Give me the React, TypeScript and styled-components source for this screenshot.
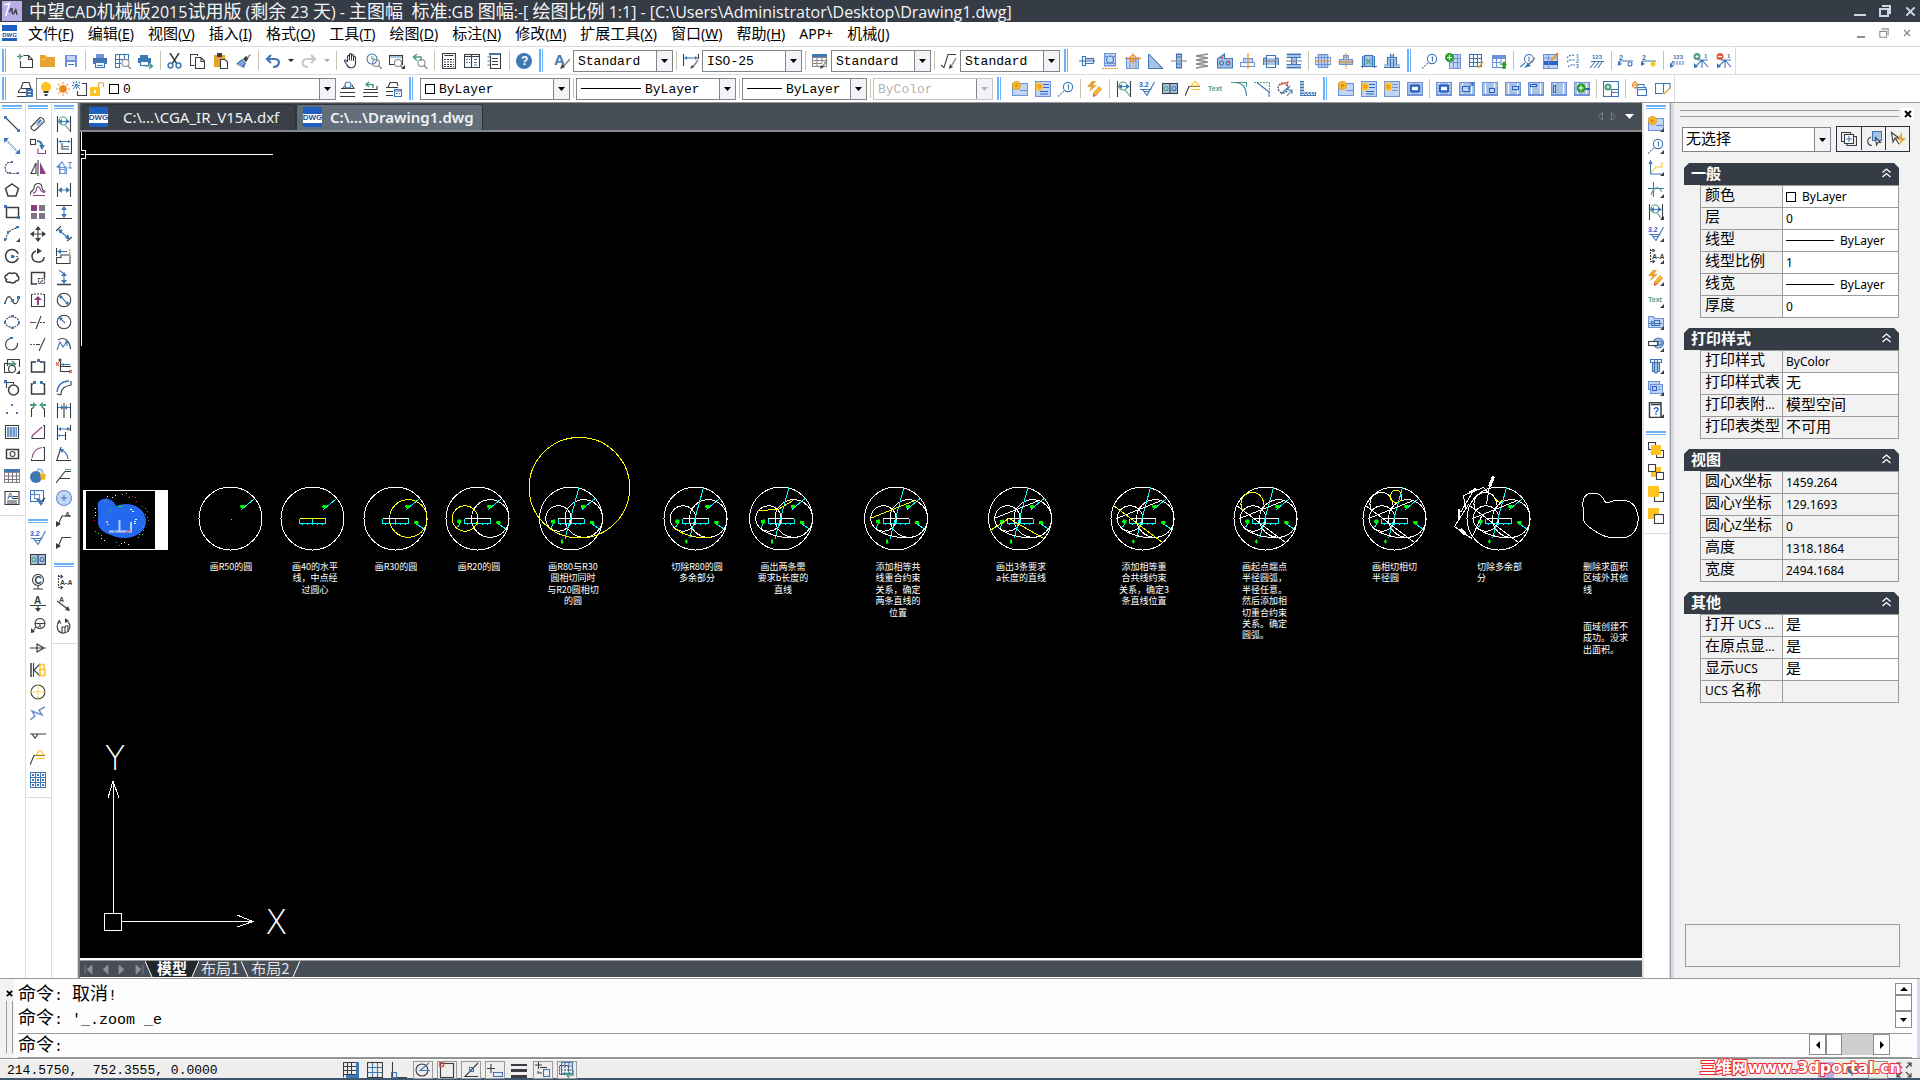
import React from "react";
import styled, { createGlobalStyle } from "styled-components";

const sans = `"Noto Sans", "Noto Sans CJK SC", sans-serif`;
const mono = `"Liberation Mono", "Noto Sans CJK SC", monospace`;

const Global = createGlobalStyle`
  *, *::before, *::after { box-sizing: border-box; }
  body { margin: 0; background: #fff; font-family: ${sans}; color: #000; overflow: hidden; }
  button, select, input { font: inherit; color: inherit; margin: 0; padding: 0; border: 0; background: none; border-radius: 0; }
`;

/* ---------- icon set: "<colour><mode><shape>" joined by "|" ---------- */
/* modes: space = line, ! = fill, * = thick line, - = dashed line        */

const paints: Record<string, string> = {
  D: "#3a3d42", B: "#3f77b5", G: "#4f9d84", P: "#8a4184", O: "#e5a431", Y: "#ffc322",
  W: "#ffffff", L: "#c3d6f5", R: "#e05a43", K: "#8a8a8a", S: "#6f93d6", N: "#c8c8c8",
  H: "#2d62c8", E: "#2aa02a", F: "#a9c3e4", V: "#b9aee6", A: "#e98a1d", M: "#7f7585",
};

const viewport = "F!r 0 1 16 14|S r .5 1.5 15 12|W M3.5 2V13M12.5 2V13|S!r 0 13 16 2|";
const sheet = "L!r 1 3 14 12|S r .5 2.5 15 12|S M8 9.5H15|";
const burst = "Y!M4 0L5.2 2.8L8 2L6.8 4.8L9 6L6.8 7L8 9.6L5.2 8.8L4 11L3 8.8L0 9.6L1.4 7L0 5L1.4 4.6L0 2L3 2.8Z|A c 4.3 5.5 1.5|";
const gold = "O!c 4.5 4.5 4.5|Y c 4.5 4.5 2.6|A c 4.5 4.5 1|";
const balloon = "B c 10 6 4.6|B-M0 15.5L6.5 9.5|B M10.5 3.5V8.5M9.5 4.5H10.5|";
const corner = "|D!M16 16H12L16 12Z";
const rough = "Ht 0 6 7 3.2|B M1 8.5H12.5M15.5 1L8 14.5L3.5 8.5M5 10.5H10";
const dimv = "D M1.5 0V16M14.5 0V16|G c 7 5 4|B M3 5.5H13|B!M2 5.5L6 3V8Z|B!M14 5.5L10 3V8Z|G M9 9L14 15";
const bolt = "O!M5 0L0 6H4L2 11L10 4H6L9 0Z|O!M6 12L12 5L15 8L9 15Z|Y*M8 12L13 7|R!M6 12L9 15L6 16Z";
const textIcon = "Gt 0 10 7 Text";
const sectionA = "D-M2.5 1V14M2.5 2.5H6M2.5 13.5H6|D M4.5 1L6.5 2.5L4.5 4M4.5 12L6.5 13.5L4.5 15|Dt 4 11 7 A-A";

const icons: Record<string, string> = {
  new: "D M6.5 2.5H11.5L15.5 6.5V14.5H3.5V8M11.5 2.5V6.5H15.5|G*M0 3.5H6M3 1V6.5",
  open: "O!M0 2H5L7 4H15V14H0Z|Y M1 6.5H4L6 4.5",
  save: "S!M2 2H14V14H2Z|W!M4 9H12V14H4Z|L!r 4 3 8 4|B M5 11.5H11",
  print: "S!M4 1H12V5H4Z|B!M1 5H15V11H1Z|W!r 4 9 8 5|B r 3.5 9.5 9 5|B M5 12.5H11",
  preview: "B r .5 1.5 13 5|B M4.5 1V14M9.5 1V7M0 10.5H6M.5 1V14.5H5|W!c 10.5 10 4|K c 10.5 10 3.5|K*M13 13L16 16",
  publish: "B!M2 2H10V5H2Z|B!M0 5H13V10H0Z|W!r 3 8 8 5|B r 2.5 8.5 8 4|G*M7 13H14M11 10L14.5 13L11 16",
  cut: "D*M3 0L10 11M12 0L5 11|B*c 3.5 12.5 2.4|B*c 11.5 12.5 2.4",
  copy: "D M4.5 12.5H.5V1.5H7.5V3|D M5.5 4.5H11L14.5 8V15.5H5.5ZM11 4.5V8.5H14.5",
  paste: "O!r 1 2 11 12|D!r 4 0 5 4|W!M7 6H12L15 9V16H7Z|D M7.5 6.5H12L14.5 9V15.5H7.5Z",
  brush: "B!M0 11L6 6L10 10L8 15Z|F M2 12L7 8M4 13.5L8 9.5|D!M7 6L10 3L12.5 5.5L10 9Z|K*M11 5L14.5 1.5",
  undo: "B^M3 6H10C16 6 15 14 8 14M6 2L2 6L6 10",
  redo: "N^M12 6H6C0 6 0 14 7 14M10 2L14 6L10 10",
  pan: "D M4.5 9V3.5C5 2 6 2 6.5 3.5V7.5V1.5C7 0 8 0 8.5 1.5V7.5V2.5C9 1 10 1 10.5 2.5V8V4.5C11 3 12 3 12.5 4.5V10C12.5 16 5.500 16 4 12L1.500 8C1.500 6.500 3 6.500 4.500 9",
  zoomrt: "B c 6 6 5|G M6 3V6H9|K c 10 10 3.5|K*M12.5 12.5L16 16",
  zoomwin: "D r .5 2.500 13 9|F!r 1 3 12 2|W!c 9 10 4|K c 9 10 3.5|K*M11.5 12.5L14 15" + corner,
  zoomprev: "G*M2 4H9V8M5 1L1.500 4L5 7.5|K c 9.5 10 3.5|K*M12 12.5L15.500 16",
  sheetlist: "D r 1.5 .5 13 15|D M3.500 2.5H12.500|D-M3 6.5H13M3 9H13M3 11.500H13M3 13.500H13",
  dcenter: "D r .5 1.500 15 13|D M7.5 1V15M0 3.500H16|B-M2 6.5H6M2 9.5H6|B M10 6.500H13M10 9.500H13M10 12H13",
  book: "B!r 2 0 12 2|D M3.500 2.5V15.500H13.500V.5|D M5 5.500H11M5 8.500H11M5 11.500H11|B M.5 4H3M.5 8H3M.5 12H3",
  help: "B!c 8 8 8|Wt 5 12 12 ?",
  tstyle: "Bt 0 12 15 A|K*M16 6L9 14|D!M6 16L8 11L11 14Z",
  dstyle: "D M.5 1V13M15.5 1V6|B M2 5H14|B!M1 5L4 3V7Z|B!M15 5L12 3V7Z|K*M15 7L10 14|D!M7 16L9 12L11 14Z",
  tbstyle: "B!r 0 1 15 4|K r .5 4.500 14 9|K M5 4V14M10 4V10M0 7.500H14M0 10.500H10|K*M15 7L11 13|D!M8 16L9 12L12 14Z",
  mlstyle: "D M0 12L3 14.500L7 1.500H15|K*M15 5L11 12|D!M8 16L9 11L12 14Z",
  layers: "D M4 7.500L6 1.5H12L14 7.500ZM1 11.500L3 8M0 15.5H9M1 11.500H9|B!r 9 8 7 8|W M11 10.500H14M11 13.500H14",
  bulb: "Y!c 8 6 5|D!r 5.500 10 5 2|D!r 6.500 13 3 2",
  sun: "A!c 8 8 3.800|A-M8 1V15M1 8H15M3 3L13 13M13 3L3 13",
  freeze: "B-M4.5 0V9M0 4.500H9M1 1L8 8M8 1L1 8|D M10 2.500H14.500V14.500H5.500V10",
  lock: "Y!r 1 6 10 9|O M9.500 6V3C9.500 1 14.500 1 14.500 3V6|W!r 5 9 2 3",
  layobj: "D M3 8L4.500 5M0 15.500H15M0 11.500H15M1 7.500H14L12 4|B c 8 4 3",
  layprev: "D M0 15.500H15M0 11.500H15M1 8.500H14V5|G*M3 3.500H10V7M6 1L3 3.500L6 6",
  laystate: "D M2 6.500L4 1.500H11L12 5M0 6.500H12M0 10.500H7M0 14.500H7|B r 8.500 8.500 7 7|B M8 10H16|B-M10 12.500H14",
  bolt1: "B M0 8H16|B r 3.5 3.500 3 9|B r 6.500 5.500 8 5|F!r 7 6 7 1",
  bearing: "L!r 2 0 12 14|S r 2.5 .5 11 12|B c 8 6.5 3.500|S M2 3.5H14M2 10.500H14|A-M0 15.500H16",
  gear1: "L!r 1 4 13 11|S M1.500 4V15.500H13.500V4M5 15V6H11V15|A M0 5.500H16|A-M8 0V16|A c 8 5.500 3",
  wedge: "F!M0 1L15 15H0Z|B M1 1L14.500 15.500H.5V1",
  pulley: "F!r 5 0 6 16|B r 5.5 1.500 5 13|B M5 4H11M5 11H11|K M0 8H16",
  spring: "K*M2 3L14 1M2 3L14 5M2 7L14 5M2 7L14 9M2 11L14 9M2 11L14 13M2 15L14 13",
  pump: "F!M0 6L8 0V5H15V15H0Z|B M.5 6L7.500 1V5.500H15.500V15H.5Z|B c 4.500 10 2|B c 11 10 2|R!r 4 4 2 2|R!r 10 8 2 2",
  seat: "L!r 3 5 10 5|S r 3.500 5.500 9 4|S r .5 9.500 14 4|A M8 0V16",
  nut: "F!r 1 5 14 7|B r 3.5 2.500 9 12|B M.5 5V12M15.500 5V12M.5 5H4M12 5H15|K M0 8H16",
  spool: "F!M1 0H15V4H11V12H15V16H1V12H5V4H1Z|B M.5 1.500H15M.5 4.500H15M.5 11.500H15M.5 14.500H15M5.500 4V12M10.500 4V12|K M0 8H16",
  flange1: "L!r 2 2 12 12|S r 3.500 1.500 9 13|S r .5 4.500 15 7|S M6.500 1V15M9.500 1V15|A M0 8H16",
  flange2: "F!M5 2H11V6H15V11H1V6H5Z|S M5.500 2.500H10.500V6.500H14.500V11.500H1.500V6.500H5.500Z|A M0 9H16|A-M8 0V16",
  frame1: "F!r 1 3 13 10|B r 3.500 2.500 8 11|G M5 6L10 11M10 6L5 11|B M1.500 3V15M13.500 3V15M0 13.500H16",
  motor: "F!M6 1H10V4H13V11H16V15H0V11H3V4H6Z|B M6.500 1V4M9.500 1V4M3.500 4.500H12.500M3.500 4V12M12.500 4V12M0 14.500H16M6.500 6V14M9.500 6V14",
  balloon,
  tabadd: "L!r 4 1 12 15|S M4.500 1V15.500H15.500V1.500H5M4 5.500H16M4 9.500H16M8.500 1V16M12.500 1V16|E!c 4.500 4.500 4.500|W M4.500 2V7M2 4.500H7",
  tabedit: "B r 1.500 1.500 12 12|B M1 5.500H14M1 9.500H14M5.500 1V14M9.500 1V14|O*M15 9L10 15",
  tabup: "S r 1.500 2.500 13 12|S!r 1 2 14 4|S M1 9.500H10M5.500 5V15M10 5V12|E!M13 8L16 12H14.500V16H11.500V12H10Z",
  ballbrush: "B c 9 6 4.500|B M9 3.500V8.500|B M0 14L5 10|K*M15 5L8 12|B!M4 15L8 10L11 13Z",
  tabpen: "L!r 1 1 14 14|S r .5 1.500 14 14|H!r 1 8 14 4|S M1 5H14M5.500 1V15|O^M14 1L8 8|R M15 0L13 2",
  numlist: "B-M1 5C3 2 6 2 9 2.500M1 9C4 6 7 7 9 7M2 14C5 11 7 12 9 12|Bt 10 5 5 1|Bt 10 10 5 2|Bt 10 15 5 3",
  num123: "Bt 3 6 6 123|B M2 8.500H15M1 15L6 9M5 15L10 9M9 15L13 9",
  bulboff: "Bt 1 7 7 2|B M0 12L2 8H15|B!M0 13V8L4 11Z|B c 12 11 2",
  bulbon: "Bt 1 7 7 2|B M0 12L2 8H15|B!M0 13V8L4 11Z|Y!c 12 11 2.500",
  num123b: "Bt 3 6 6 123|B-M3 9H15M3 11H15|B M0 14L3 8|B!M0 15V10L4 13Z",
  branchadd: "G!c 4 3.500 3.500|W M4 2V5M2.500 3.500H5.500|B M2 14L9 7L15 14M9 7V15M5 7H15|B!M1 15V10L5 14Z|Bt 11 5 6 1",
  branchdel: "R!c 4 3.500 3.500|W M2 3.500H6|B M2 14L9 7L15 14M9 7V15M5 7H15|B!M1 15V10L5 14Z|Bt 11 5 6 1",
  sheetgold: sheet + gold,
  sheetburst: "L!r 1 1 14 14|S r .5 .500 15 15|H M8 3.500H14M8 6.500H14M5 10.500H13M5 13H13|" + burst,
  sheetburst2: "L!r 1 1 14 14|S r .5 .500 15 15|S M8 3.500H14M8 6.500H14M8 9.500H14|" + burst,
  bolt, dimv, rough,
  ctrlbox: "F!r 0 2 16 11|D r .5 2.500 15 10|G c 4 7.500 2|B c 12 7.500 2|D M8 2V13",
  weld: "D M0 15L4 5.500H15|Y M6 5L10 0L14 5ZM6 8.500H15",
  text: textIcon,
  fillet: "G M0 1.500H15.500V6|B M4 1.500C12 2 15 6 15.500 15",
  chamfer: "G-M0 1.500H15.500V12|B M3 1.500L15 11V16",
  hatchrot: "D-c 6 7 5|R M3 4L11 1L9 5|B*M4 13L13 5|B M10 15L15 9M11 9H15V13",
  angle: "B!M0 0H4V11H16V15H0Z|W-M1 1V14M3 1V12M2 13.500H15M4 12H15",
  vp1: viewport + "H^r 4 4.500 8 6|W!r 5 6 6 3",
  vp2: viewport + "L!r 3 5 8 6|H r 3.500 5.500 7 5|H M9 8L14 2M11 2H14V5",
  vp3: viewport + "H r 7.500 7.500 5 4|L!r 8 8 4 3",
  vp4: viewport + "H r 7.500 5.500 6 3|L!r 8 6 5 2",
  vp5: viewport + "H r 2.500 3.500 6 2|L!r 3 4 5 1",
  vp6: viewport + "H r 2.500 4.500 2 7|L!r 3 5 1 6",
  vpadd: viewport + "H!r 9 7 7 2|E!c 7 7 4.500|W M7 4.500V9.500M4.500 7H9.500",
  tbladd: "B r .5 .500 15 15|G!c 5 6 3.500|W M5 4.500V7.500M3.500 6H6.500|B M8 8.500H16M8 11.500H16M8.500 8V16",
  stack: "A c 3 4 2.500|A-M3 0V8M0 4H7|B M6 3.500H12V6M5 8V6.500H14V8|B r 5.500 8.500 9 6",
  pageedit: "B M8 12.500H.5V2.500H15V8M8.500 2V12|O*M15 7L9 13",
  line: "D M2 2L14 14|B!r 0 0 3 3|B!r 13 13 3 3",
  xline: "B*M1 1L15 15|W-M1 1L15 15|B!M0 0H5L0 5Z|B!M16 16H11L16 11Z",
  pline: "D-M8 2.500H4C0 5 0 13 6 13.500H15|B!r 7 1 2 2|B!r 13 12 2 2|B!r 5 12 2 2",
  polygon: "D*M8 2L14.500 6.500L12 14H4L1.500 6.500Z",
  rect: "D*r 2.500 3.500 12 10|B!r 0 1 3 3|B!r 13 12 3 3",
  arc: "D-M2 14C2 7 8 2 14 2|B!r 0 12 2 3|B!r 3 5 2 3|B!r 12 0 3 2" + corner,
  circle: "D*c 8 8 6.500|W!r 13 6 3 4|B!r 7 7 3 3|B-M9 8.500H15",
  cloud: "D*M3 5C4 2 7 3 8 3.500C11 2 14 4 13 5.500C16 7 15 11 12 11C10 14 7 13 6 12C3 13 1 11 2.500 9.500C0 8 1 5 3 5Z",
  spline: "D M1 11C4 2 6 4 8 8C10 14 14 12 14.500 6|B!r 0 10 2 2|B!r 7 7 3 3|B!r 13 4 3 3",
  ellipse: "D-M1 8C2 1 14 1 15 8C14 15 2 15 1 8|B!r 0 7 2 3|B!r 14 7 2 3|B!r 7 1 3 2|B!r 7 13 3 2",
  earc: "D M6 2.500C0 5 0 13 7 14C12 14 14 10 13.500 7|B!r 6 1 3 2",
  insert: "D M3.500 8V1.500H15.500V9|D r .5 5.500 8 9|G*M4 6H11M8 3L11.500 6L8 9|W!c 8 11 4|D c 8 11 3.500" + corner,
  block: "D M2.500 8V2.500H9.500V4|D*c 9.500 10 5|B!r 0 0 3 3",
  points: "B!r 7 2 2 2|B!r 2 10 2 2|B!r 12 10 2 2",
  hatch: "D r 1.500 1.500 13 13|F!r 3 3 10 10|B-M3 4H13M3 6H13M3 8H13M3 10H13M3 12H13",
  region: "D*r 2.500 3.500 12 9|D c 8.500 8 2.500",
  table: "B!r 0 1 16 4|K r .5 4.500 15 10|M M4.500 5V15M8.500 5V15M12.500 5V15M0 8H16M0 11.500H16",
  mtext: "D r 1 1.500 14 13|Bt 3 9 9 A|D M9 6.500H14M9 8.500H14M3 11H13M3 13H13",
  erase: "D M1 11L10 1.500C12 1 15 4 14 6L5 14.500C3 15 1 13 1 11Z|F!M5 7L10 3L13 6L8 11Z|B*M8 7L11 4",
  copyobj: "D r .5 1.500 5 5|B^M7 3C11 3 12 6 12 9|B!M9 7H15L12 12Z|P M8 10.500V15.500H15.500V12",
  mirror: "D M6 3L1 13.500H6Z|P!M10 2V14H16Z|D M8 0V16",
  offset: "D M0 13.500C0 8 4 9 4 6C4 0 12 0 12 6C12 9 15 8 15 10|P M3 13.500H15M3 11C8 11 5 5 8 4.500C11 5 9 10 15 10.500",
  array: "P!r 1 1 6 6|M!r 9 1 6 6|M!r 1 9 6 6|M!r 9 9 6 6",
  move: "D M8 1V15M1 8H15|D!M8 0L11 4H5Z|D!M8 16L11 12H5Z|D!M0 8L4 5V11Z|D!M16 8L12 5V11Z",
  rotate: "D*M6 3C0 5 1 14 8 14C13 14 14 11 14 9|D!M7 0L12 3L7 6Z",
  scale: "D*M7 14H1.500V2.500H14.500V8|D-r 8.500 8.500 6 5|P M10 13L13 10",
  stretch: "D M3 2.500H1.500V14.500H14.500V2.500H13|D-M4 2H12|P!M8 4L12 8H9V13H7V8H4Z",
  trim: "D M6 15L11 2|P M0 8.500H6|D-M10 8.500H16",
  extend: "D M9 15L15 2|P-M0 8.500H5|D M6 8.500H10",
  breakpt: "D*M6 4H1.500V14H14.500V4H10|B!r 7 1 3 3",
  breakat: "D*M3 4H1.500V14H14.500V4H13|B!r 3 1 3 3|B!r 10 1 3 3",
  join: "D M1.500 15V7L4 5M14.500 15V7L12 5|G!M0 2H3V0L7 3L3 6V4H0Z|G!M16 2H13V0L9 3L13 6V4H16Z",
  chamf: "D M13 1.500H14.500V14.500H2V12|P M2 12L12 3",
  fil: "D M13 1.500H14.500V14.500H1.500V13|P M2 12C3 6 7 2 12 1.500",
  explode: "B!c 6 9 6|F^M7 3C9 0 12 1 13 5|Y!M10 5L16 6L15 12L11 12Z|O M11 6L15 11M15 6L11 11",
  qselect: "B r .5 .500 13 11|B M4.500 0V4M0 4.500H4|S r 4.500 4.500 5 4|D*M15 8L12 11|B!M6 9L10 9L13 13L11 16Z",
  dimbase: "D M1.500 0V15.500H15.500V0M6 5V11H13|B M3 3.500H14M7 8.500H13|B!M2 3.500L5 2V5Z|B!M15 3.500L12 2V5Z",
  dimnew: "S M2 6L6 2L9 7M3 9.500H11M4 5V13M9 6V14|S!M0 7L4 4L4 9Z|S r 3.500 7.500 7 6|S M12 2.500H16M12 8H16M14 3V8",
  dimlin: "D M1.500 1V15M14.500 1V15|B M3 8H13|B!M2 8L6 5V11Z|B!M14 8L10 5V11Z",
  dimver: "D M0 1.500H16M0 14.500H16|B M8 3V13|B!M8 2L5 6H11Z|B!M8 14L5 10H11Z",
  dimali: "D M0 5L5 0M11 15L16 11|B M3 4L12 12|B!M2 3L7 4L4 8Z|B!M14 14L9 12L12 8Z",
  dimord: "D M.5 0V8M.5 15.500V9.500H5V7H14V15.500Z|B M2 3.500H11|B!M1 3.500L5 1V6Z|O-M13.500 1V14",
  dimjog: "D*M1 14.500H15|B M8 3V13M3 0L7 3|B!M8 2L5 6H11Z|B!M8 14L5 10H11Z",
  diadim: "D c 8 8 6.800|B M4 4L12 12|B!M3 3L7 4L4 7Z|B!M13 13L9 12L12 9Z",
  raddim: "D c 8 8 6.800|B M4 4L9 9|B!M3 3L7 4L4 7Z",
  jogdim: "D M2 4C8 0 14 5 14.500 13|B M1 14L4 6L7 11L11 5M11 5V10|B!M11 4L13 7L9 7Z",
  orddim: "D c 4 2 1|D M4.500 3V13.500H15M4 8.500H15|B M5 6.500H14|R M0 4L3 8M3 4L0 8M13 12L16 15M16 12L13 15|B!M5 6.500L8 5V8Z",
  arcdim: "D M5 15C5 8 9 6 15 5V1M1 14L5 15|B*M1 12C2 5 6 1 13 1",
  contdim: "D M1.500 1V16M14.500 1V16M8 1V16|B M2 5.500H14|B!M5 3V8L8 5.500Z|B!M11 3V8L8 5.500Z",
  basedim: "D M1.500 1V16M14.500 1V7M9.500 8V16|B M3 5H14M3 11.500H9|B!M2 5L5 3V7Z|B!M14 5L11 3V7Z|B!M2 11.500L4 10V13Z",
  angdim: "D M0 14.500H15M1 14L5 1|B M5 4C9 5 12 9 12 13|B!M3 3L8 3L6 7Z",
  mleader: "D M0 15L9 3.500H15M3 10.500H14|G M9 1.500H15",
  center: "L!c 8 8 7.500|S c 8 8 7.500|B M8 5V11M5 8H11",
  leada: "D M2 13L6 4H15|D!M0 15V9L5 12Z|Dt 9 5 7 A",
  lead: "D M2 13L6 3.500H15|D!M0 15V9L5 12Z",
  datumc: "D c 8 6 5.500|Dt 4.500 10 10 C|D M8 12V15M3 15H13",
  datuma: "Dt 4 8 10 A|D M0 9.500H16M8 9V14|D!M5 12H11L8 16Z",
  bubble: "D c 10 5.500 5|D M5 5.500H15|Dt 8 10 5 A|D M6 9L2 14|D!M1 15V10L5 14Z",
  taper: "D M0 8H16M7 4V12L14 8Z",
  kb: "D*M1 1V15|D M3.500 1V15M10 2L4 8L10 14|Y*M10 2.500H14V7.500H10ZM10 7.500H15V13.500H10Z",
  crossc: "D c 8 8 7|Y-M0 8H16M8 0V16",
  zig: "S*M0 14L5 10L2 5L12 9L9 4L15 1",
  vee: "D M0 6H16M2 6L5 10L8 6",
  gridsq: "B!r 0 0 16 16|W!r 1 1 4 4|W!r 6 1 4 4|W!r 11 1 4 4|W!r 1 6 4 4|W!r 6 6 4 4|W!r 11 6 4 4|W!r 1 11 4 4|W!r 6 11 4 4|W!r 11 11 4 4|B!r 2 2 2 2|B!r 7 2 2 2|B!r 12 2 2 2|B!r 2 7 2 2|B!r 7 7 2 2|B!r 12 7 2 2|B!r 2 12 2 2|B!r 7 12 2 2|B!r 12 12 2 2",
  secta: sectionA,
  arrowa: "D M1 5L13 14|D!M14 15L9 14L12 10Z|Dt 3 6 7 A",
  rota: "D M4 3C0 6 0 13 6 15C13 16 16 8 12 4|Dt 1 6 6 A|D M6 15V9H9V15M9 8H12V14|D!M9 0L13 3L9 5Z",
  rgold: sheet + gold + corner,
  rballoon: balloon + corner.slice(1),
  rplot: "B M2.500 2V14H15M1 4L2.500 1L4 4|Y M3 13L8 7H14V2" + corner,
  rcross: "B M5.500 0V15M0 6.500H16|G M3 13C6 5 10 3 14 10" + corner,
  rdimv: dimv + corner,
  rrough: rough + corner,
  rsecta: sectionA + corner,
  rbolt: bolt + corner,
  rtext: textIcon + corner,
  rfolder: "L!M0 2H5L7 4H15V14H0Z|S M.5 2.500H5L7 4.500H15.500V13.500H.5Z|B M1 9.500H14|B r 3.500 7.500 3 4|B r 6.500 6.500 5 5" + corner,
  rshaft: "F!c 10 7 5|B c 10.500 7 5|W!r 0 5 9 5|D r .5 5.500 9 4|B c 12 7 2" + corner,
  rbolt2: "F!r 4 4 8 10|B r 2.500 1.500 11 3|B M4.500 4V13L8 15L11.500 13V4M6.500 2V14M9.500 2V14" + corner,
  rcard: "L!r 1 1 11 9|S r .5 1.500 11 8|L!r 3 4 12 9|S r 2.500 4.500 12 9|H r 4.500 6.500 4 4|S M10 7H13M10 9.500H13" + corner,
  rhelp: "D*M1.500 0V15.500H13V2.500H3M1 .5H13V3|Ht 5 13 10 ?" + corner,
  ord1: "D r .5 .500 7 7|D r 8.500 8.500 7 7|Y!r 3 3 10 10",
  ord2: "Y!r 3 3 10 10|W!r 0 0 8 8|D r .5 .500 7 7|W!r 8 8 8 8|D r 8.500 8.500 7 7",
  ord3: "D r 6.500 6.500 9 9|Y!r 0 0 11 11",
  ord4: "Y!r 0 0 11 11|W!r 6 6 10 10|D r 6.500 6.500 9 9",
  pick: "D M3 10.500H.5V1.500H9.500V4M6 12.500V14.500H15.500V5.500H13|W!r 3 3 10 10|D r 3.500 3.500 9 9|B M8 5V11M5 8H11",
  selobj: "D M5 6C0 8 1 14 6 14.500|F!r 6 0 9 9|B r 6.500 .500 9 9|W!M9 6L15 12H12L11 15Z|D M9.500 6.500L14.500 11.500H12L10.500 14Z",
  quick: "D M1.500 1.500L9 7H5L3 11ZM5 7L9 13|O!M12 1L7 9H11L8 15L16 7H12Z",
  snap: "D M.5 15.500V.5H13M4.500 0V16M8.500 0V16M0 4.500H13M0 8.500H13M0 12.500H13|B!r 13 0 3 14|B!r 3 13 13 3",
  grid: "D r .5 .500 15 15|B M5.500 1V15M10.500 1V15M1 5.500H15M1 10.500H15",
  ortho: "D M1.500 0V15.500H16|B r .5 10.500 5 5",
  polar: "D c 7 8 6|B M14 1L5 8.500H15",
  osnap: "D r 1.500 1.500 13 14|R*r .500 .500 4 4",
  otrack: "D M15 1L2 14.500H15|B r 6.500 5.500 4 4",
  dyn: "D M0 6.500H8M4 2V11|B r 6.500 10.500 9 4",
  lwt: "D!r 0 2 16 2|D!r 0 7 16 3|D!r 0 13 16 3",
  ducs: "D M0 3H7M3.500 0V7M3 9V11H7|B r 8.500 7.500 6 7|D M5 5.500H12",
  annot: "B r 2.500 .500 11 11|B-M2 4H14M2 8H14M6 1V12M10 1V12|D-r .5 3.500 9 9|G*M14 8V13H8M10 10L8 13L10 16",
  gearst: "B!c 8 7 5|B-M8 0V14M1 7H15|W!c 8 7 2",
  full: "D M1 5V1H5M11 1H15V5M15 11V15H11M5 15H1V11M1 1L6 6M15 1L10 6M15 15L10 10M1 15L6 10",
  logo: "V!r 0 0 16 16|W M2 3L6 2L3 12|D M6 9C7 5 9 5 8 9C9 12 10 9 11 7L12 11",
};

const strokeWidths: Record<string, number> = { "*": 1.5, "^": 2.2 };

const shapeOf = (item: string, key: number) => {
  const colour = paints[item[0]];
  const mode = item[1];
  if (mode === "t") {
    const [x, y, size, ...rest] = item.slice(2).trim().split(" ");
    return (
      <text key={key} x={x} y={y} fontSize={size} fill={colour} fontFamily="Liberation Sans, sans-serif" fontWeight="700">
        {rest.join(" ")}
      </text>
    );
  }
  const body = item.slice(2);
  const look =
    mode === "!"
      ? { fill: colour }
      : { fill: "none", stroke: colour, strokeWidth: strokeWidths[mode] ?? 1.1, strokeDasharray: mode === "-" ? "2 1" : undefined };
  if (body[0] === "c") {
    const [cx, cy, r] = body.slice(1).trim().split(" ");
    return <circle key={key} cx={cx} cy={cy} r={r} {...look} />;
  }
  if (body[0] === "r") {
    const [x, y, width, height] = body.slice(1).trim().split(" ");
    return <rect key={key} x={x} y={y} width={width} height={height} {...look} />;
  }
  return <path key={key} d={body} {...look} />;
};

const Icon = ({ name, size = 16 }: { name: string; size?: number }) => (
  <svg width={size} height={size} viewBox="0 0 16 16" aria-hidden="true">
    {icons[name].split("|").filter(Boolean).map(shapeOf)}
  </svg>
);

/* ---------- text with Chinese runs set larger than Latin runs ---------- */

const Han = styled.span<{ $size: number }>`
  font-family: "Noto Sans CJK SC", sans-serif;
  font-size: ${(p) => p.$size}px;
  line-height: 1;
`;
const Mixed = ({ text, han }: { text: string; han: number }) => (
  <>
    {text.split(/([\u3000-\u9fff]+)/).map((part, i) => (i % 2 ? <Han key={i} $size={han}>{part}</Han> : part))}
  </>
);

/* ---------- window frame ---------- */

const Screen = styled.div`
  display: flex;
  flex-direction: column;
  min-height: 100vh;
  height: 100vh;
`;
const TitleBar = styled.header`
  display: flex;
  align-items: center;
  gap: 7px;
  height: 22px;
  padding: 0 4px 0 2px;
  background: #363c46;
  color: #f4f5f7;
`;
const TitleText = styled.h1`
  flex: 1;
  margin: 0;
  font: 400 16px/20px "Open Sans", "Noto Sans CJK SC", sans-serif;
  white-space: pre;
`;
const WindowButtons = styled.div<{ $gap: number }>`
  display: flex;
  gap: ${(p) => p.$gap}px;
`;
const BareButton = styled.button<{ $w?: number }>`
  display: flex;
  align-items: center;
  justify-content: center;
  width: ${(p) => p.$w ?? 12}px;
`;
const MenuBar = styled.nav`
  display: flex;
  align-items: center;
  height: 25px;
  padding: 0 7px 2px 2px;
  gap: 11px;
  background: #fff;
  border-bottom: 1px solid #dcdcdc;
`;
const MenuList = styled.ul`
  display: flex;
  flex: 1;
  gap: 14px;
  margin: 0;
  padding: 0;
  list-style: none;
`;
const MenuButton = styled.button`
  font-size: 14px;
  line-height: 20px;
  white-space: nowrap;
`;
const DwgBadge = styled.span<{ $s: number }>`
  display: flex;
  align-items: center;
  flex: none;
  width: ${(p) => p.$s}px;
  height: ${(p) => p.$s + 1}px;
  background: linear-gradient(#1f5fc0 36%, #fff 36%, #fff 80%, #1f5fc0 80%);
  color: #1f4f9c;
  font: 700 ${(p) => (p.$s > 16 ? 8 : 6)}px/8px "Liberation Sans", sans-serif;
  justify-content: center;
  padding-top: 3px;
`;

const ToolRow = styled.div<{ $strong?: boolean }>`
  display: flex;
  gap: 4px;
  height: 28px;
  padding-left: 2px;
  background: #fff;
  border-bottom: 1px solid ${(p) => (p.$strong ? "#9a9a9a" : "#dcdcdc")};
`;
const ToolGroup = styled.div<{ $last?: boolean }>`
  display: flex;
  align-items: center;
  border-right: ${(p) => (p.$last ? "1px solid #dcdcdc" : "0")};
`;
const Grip = styled.span`
  width: 4px;
  height: 23px;
  margin-right: 7px;
  border: solid #6cb2f8;
  border-width: 0 1px 0 2px;
`;
const ToolButton = styled.button`
  display: flex;
  align-items: center;
  justify-content: center;
  width: 23px;
  height: 22px;
`;
const Caret = styled.button<{ $pale?: boolean }>`
  width: 13px;
  height: 22px;
  display: flex;
  align-items: center;
  justify-content: center;
  color: ${(p) => (p.$pale ? "#aaa" : "#222")};
`;
const Divider = styled.span`
  width: 6px;
  height: 19px;
  background: linear-gradient(90deg, transparent 3px, #c9c4b0 3px, #c9c4b0 4px, transparent 4px);
`;
const Triangle = ({ color = "currentColor", w = 7, h = 4 }: { color?: string; w?: number; h?: number }) => (
  <svg width={w} height={h} viewBox="0 0 8 4" preserveAspectRatio="none" aria-hidden="true"><path d="M0 0H8L4 4Z" fill={color} /></svg>
);

const ComboBox = styled.label<{ $w: number; $off?: boolean }>`
  display: flex;
  align-items: center;
  gap: 4px;
  width: ${(p) => p.$w}px;
  height: 22px;
  padding-left: 4px;
  border: 1px solid ${(p) => (p.$off ? "#c4c4c4" : "#858585")};
  background: #fff;
  color: ${(p) => (p.$off ? "#b5b5b5" : "#000")};
  font: 13px/18px ${mono};
`;
const ComboSelect = styled.select`
  appearance: none;
  flex: 1;
  min-width: 0;
  height: 20px;
  padding-top: 2px;
  opacity: 1;
  outline: 0;
`;
const ComboArrow = styled.span`
  display: flex;
  align-items: center;
  justify-content: center;
  align-self: stretch;
  width: 16px;
  background: linear-gradient(90deg, #858585 1px, #f1f3f6 1px);
`;
const Swatch = styled.span`
  width: 10px;
  height: 10px;
  flex: none;
  border: 1px solid #000;
`;
const Stroke = styled.span<{ $w: number }>`
  width: ${(p) => p.$w}px;
  height: 1px;
  flex: none;
  background: #000;
`;
const LayerIcons = styled.span`
  display: flex;
  align-items: center;
  gap: 1px;
  margin-left: -3px;
`;
const Combo = ({ name, value, w, off, children }: { name: string; value: string; w: number; off?: boolean; children?: React.ReactNode }) => (
  <ComboBox $w={w} $off={off}>
    {children}
    <ComboSelect aria-label={name} disabled={off} defaultValue={value}><option>{value}</option></ComboSelect>
    <ComboArrow><Triangle /></ComboArrow>
  </ComboBox>
);
const Tools = ({ list }: { list: string }) => (
  <>
    {list.split(" ").map((n, i) =>
      n === "|" ? <Divider key={i} />
        : n === "v" || n === "w" ? <Caret key={i} $pale={n === "w"} aria-label="more"><Triangle w={6} h={3} /></Caret>
        : <ToolButton key={i} aria-label={n}><Icon name={n} /></ToolButton>
    )}
  </>
);

/* ---------- work area ---------- */

const WorkArea = styled.main`
  display: flex;
  flex: 1;
  min-height: 0;
  border-bottom: 1px solid #9a9a9a;
`;
const ToolColumn = styled.div`
  width: 26px;
  flex: none;
  display: flex;
  flex-direction: column;
  gap: 10px;
  padding-top: 2px;
  background: #fff;
  border-right: 1px solid #dcdcdc;
`;
const ColumnGroup = styled.div`
  display: flex;
  flex-direction: column;
  align-items: center;
  padding-right: 2px;
  &:last-child { padding-bottom: 6px; border-bottom: 1px solid #dcdcdc; }
`;
const ColumnGrip = styled.span`
  width: 20px;
  height: 4px;
  margin-bottom: 4px;
  border: solid #6cb2f8;
  border-width: 2px 0 1px;
`;
const Column = ({ groups }: { groups: string[] }) => (
  <ToolColumn>
    {groups.map((g) => (
      <ColumnGroup key={g}><ColumnGrip /><Tools list={g} /></ColumnGroup>
    ))}
  </ToolColumn>
);
const DocArea = styled.section`
  flex: 1;
  min-width: 0;
  display: flex;
  flex-direction: column;
  border-left: 2px solid #7b7d80;
  border-right: 2px solid #e4e4e4;
`;
const DocTabs = styled.div`
  display: flex;
  align-items: flex-end;
  height: 29px;
  padding: 0 8px 0 2px;
  background: #474d56;
  border-bottom: 2px solid #85878a;
`;
const DocTab = styled.button<{ $w: number; $on?: boolean }>`
  display: flex;
  align-items: center;
  gap: ${(p) => (p.$on ? 8 : 15)}px;
  width: ${(p) => p.$w}px;
  height: 26px;
  padding: 0 0 2px 6px;
  border: 1px solid #2f343b;
  border-bottom: 0;
  border-radius: 3px 3px 0 0;
  background: ${(p) => (p.$on ? "#626f7a" : "#3b3f47")};
  color: #f0f2f4;
  font-size: 15px;
  line-height: 22px;
  font-weight: ${(p) => (p.$on ? 600 : 400)};
  white-space: nowrap;
`;
const TabArrows = styled.div`
  display: flex;
  align-items: center;
  gap: 8px;
  height: 27px;
  margin-left: auto;
`;
const Canvas = styled.div`
  flex: 1;
  min-height: 0;
  background: #000;
  border-bottom: 2px solid #fff;
  svg { display: block; }
`;
const LayoutTabs = styled.div`
  display: flex;
  align-items: center;
  height: 18px;
  background: #474d56;
  border-top: 1px solid #9a9a9a;
  border-bottom: 1px solid #fff;
  color: #d9dce0;
`;
const LayoutNav = styled.div`
  display: flex;
  gap: 8px;
  padding: 0 1px 0 4px;
`;
const LayoutTab = styled.button<{ $on?: boolean }>`
  height: 16px;
  padding: 0 ${(p) => (p.$on ? 4 : 2)}px 2px;
  background: ${(p) => (p.$on ? "#22272e" : "transparent")};
  color: ${(p) => (p.$on ? "#fff" : "#e0e2e5")};
  font-family: "Noto Sans CJK SC", sans-serif;
  font-size: 15px;
  font-weight: ${(p) => (p.$on ? 700 : 400)};
  line-height: 14px;
`;
const Slant = ({ up, fill }: { up?: boolean; fill?: boolean }) => (
  <svg width="8" height="16" aria-hidden="true">
    {fill && <path d={up ? "M0 0H8L1 16H0Z" : "M0 0H8V16H7Z"} fill="#22272e" />}
    <path d={up ? "M8 0L1 16" : "M0 0L7 16"} stroke="#fff" fill="none" />
  </svg>
);

/* ---------- property panel ---------- */

const Panel = styled.aside`
  width: 250px;
  flex: none;
  display: flex;
  flex-direction: column;
  background: #f2f2f2;
  border-left: 1px solid #9a9a9a;
  box-shadow: inset 3px 0 #d3daee;
`;
const PanelHead = styled.div`
  display: flex;
  gap: 3px;
  padding: 5px 6px 0 9px;
`;
const PanelGrip = styled.div`
  flex: 1;
  height: 7px;
  margin-top: 2px;
  border: solid #9a9a9a;
  border-width: 1px 0;
`;
const PanelClose = styled.button`
  width: 12px;
  height: 11px;
  background: #fff;
  display: flex;
  align-items: center;
  justify-content: center;
`;
const PanelPick = styled.div`
  display: flex;
  gap: 5px;
  padding: 7px 10px 0 11px;
`;
const PickSelect = styled(ComboBox)`
  height: 25px;
  margin-top: 1px;
  padding-left: 3px;
  font: 15px/20px "Noto Sans CJK SC", sans-serif;
  select { height: 23px; padding: 0 0 3px; }
`;
const PickButtons = styled.div`
  display: flex;
  border: 1px solid #2a3342;
`;
const PickButton = styled.button`
  width: 24px;
  height: 23px;
  display: flex;
  align-items: center;
  justify-content: center;
  & + & { border-left: 1px solid #2a3342; }
`;
const Sections = styled.div`
  display: flex;
  flex-direction: column;
  gap: 10px;
  flex: 1;
  padding: 11px 21px 0 13px;
`;
const SectionHead = styled.h2`
  display: flex;
  align-items: center;
  justify-content: space-between;
  height: 22px;
  margin: 0;
  padding: 0 8px 2px 7px;
  background: #363c46;
  clip-path: polygon(0 5px, 5px 0, calc(100% - 5px) 0, 100% 5px, 100% 100%, 0 100%);
  color: #fff;
  font: 700 15px/20px "Noto Sans CJK SC", sans-serif;
`;
const Grid = styled.table`
  width: calc(100% - 16px);
  margin-left: 16px;
  border-collapse: collapse;
  table-layout: fixed;
  th, td {
    height: 22px;
    padding: 0 0 0 3px;
    border: 1px solid #9a9a9a;
    font-size: 12px;
    line-height: 20px;
    font-weight: 400;
    text-align: left;
    white-space: nowrap;
  }
  th { width: 82px; padding-left: 4px; }
`;
const Value = styled.td<{ $edit?: boolean }>`
  background: ${(p) => (p.$edit ? "#fff" : "#f2f2f2")};
`;
const CellFlow = styled.div<{ $raised?: boolean }>`
  display: flex;
  align-items: center;
  gap: 6px;
  height: 21px;
  padding-bottom: ${(p) => (p.$raised ? 2 : 0)}px;
`;
const DetailBox = styled.div`
  height: 43px;
  margin: 0 20px 11px 14px;
  border: 1px solid #9a9a9a;
`;

type Row = [string, string, ("swatch" | "line")?];
const sections: { title: string; edit: (i: number) => boolean; rows: Row[] }[] = [
  { title: "一般", edit: () => true, rows: [["颜色", "ByLayer", "swatch"], ["层", "0"], ["线型", "ByLayer", "line"], ["线型比例", "1"], ["线宽", "ByLayer", "line"], ["厚度", "0"]] },
  { title: "打印样式", edit: (i) => i === 1, rows: [["打印样式", "ByColor"], ["打印样式表", "无"], ["打印表附...", "模型空间"], ["打印表类型", "不可用"]] },
  { title: "视图", edit: () => false, rows: [["圆心X坐标", "1459.264"], ["圆心Y坐标", "129.1693"], ["圆心Z坐标", "0"], ["高度", "1318.1864"], ["宽度", "2494.1684"]] },
  { title: "其他", edit: (i) => i < 3, rows: [["打开 UCS ...", "是"], ["在原点显...", "是"], ["显示UCS", "是"], ["UCS 名称", ""]] },
];

const Cross = ({ size = 8, color = "#333", w = 2 }: { size?: number; color?: string; w?: number }) => (
  <svg width={size} height={size} viewBox="0 0 8 8" aria-hidden="true"><path d="M1 1L7 7M7 1L1 7" stroke={color} strokeWidth={w} /></svg>
);

/* ---------- drawing ---------- */

const GREEN = "#00ff00";
const CYAN = "#00ffff";
const YEL = "#ffff00";

const Step = ({ x, n }: { x: number; n: number }) => (
  <g transform={`translate(${x} 386.5)`} fill="none" stroke="#fff" shapeRendering="crispEdges">
    <circle r="31.5" />
    <path d="M24 -20L11 -9" stroke={CYAN} />
    <ellipse cx="12" cy="-12" rx="2" ry="1.5" fill={GREEN} stroke={GREEN} strokeWidth="0.5" />
    {n === 1 && <rect x="0" y="0" width="1" height="1" fill={CYAN} stroke="none" />}
    {n >= 2 && (
      <>
        <path d="M-13 0V5H13V0M0 0V5" stroke={CYAN} />
        <path d="M-11 6H13" stroke={CYAN} strokeDasharray="1 4" />
        <path d="M-13 0H13" stroke={n === 2 ? YEL : "#fff"} />
      </>
    )}
    {n >= 3 && (
      <>
        <circle cx="12.800" r="18.800" stroke={n === 3 ? YEL : "#fff"} />
        <path d="M19 4L29 11" stroke={CYAN} />
        <ellipse cx="21" cy="4" rx="2" ry="1.500" fill={GREEN} stroke={GREEN} strokeWidth="0.5" />
      </>
    )}
    {n >= 4 && (
      <>
        <circle cx="-12.500" r="12.700" stroke={n === 4 ? YEL : "#fff"} />
        <path d="M-17 4L-20 9" stroke={CYAN} />
        <ellipse cx="-18" cy="3" rx="2" ry="2" fill={GREEN} stroke={GREEN} strokeWidth="0.500" />
      </>
    )}
    {n === 5 && <circle cx="8.400" cy="-30.800" r="50.300" stroke={YEL} />}
    {n >= 5 && (
      <>
        <path d="M8 -31L-6 20" stroke={CYAN} />
        <ellipse cx="-9" cy="23" rx="1" ry="2" fill={GREEN} stroke={GREEN} strokeWidth="0.5" />
      </>
    )}
    {n >= 6 && <path d="M-21 10C-10 18 4 20 17 19" stroke={n === 6 ? YEL : "#fff"} />}
    {n === 7 && <path d="M-22 -8L-3 -9L12 -18" stroke={YEL} />}
    {n >= 8 && <path d="M-26 0L19 -18" stroke={n === 8 ? YEL : "#fff"} />}
    {n === 9 && <path d="M-30 12L-11 0L24 20" stroke={YEL} />}
    {n >= 10 && <path d="M-29 -13L20 24" stroke={n === 10 ? YEL : "#fff"} />}
    {n >= 11 && <path d="M-23 -8C-28 -20 -20 -26 -13 -26C-4 -26 0 -16 -2 -9" stroke={n === 11 ? YEL : "#fff"} />}
    {n === 12 && <path d="M-4 -20C-6 -31 9 -31 7 -20C6 -15 -2 -15 -4 -20Z" stroke={YEL} />}
    {n === 13 && (
      <>
        <path d="M-4 -20L1 -16L5 -19" stroke={YEL} />
        <path d="M-35 -23L-15 -31L-9 -24M-35 -23L-33 -10M-44 8L-27 20L-17 -2M-44 8L-30 -14M-38 -6L-25 -28M-12 -14L-9 -32" />
        <path d="M-9 -32L-5 -42M-38 11L-33 16" strokeWidth="3" />
        <path d="M-29 -26L-22 -30M-40 -10V0" strokeWidth="2" />
      </>
    )}
  </g>
);

const steps = [230.5, 312.5, 395.5, 477.5, 571, 695.5, 781, 896, 1020, 1142.5, 1265.5, 1394.5, 1498.5];
const notes: { x: number; y?: number; left?: boolean; lines: string[] }[] = [
  { x: 231, lines: ["画R50的圆"] },
  { x: 315, lines: ["画40的水平", "线，中点经", "过圆心"] },
  { x: 396, lines: ["画R30的圆"] },
  { x: 479, lines: ["画R20的圆"] },
  { x: 573, lines: ["画R80与R30", "圆相切同时", "与R20圆相切", "的圆"] },
  { x: 697, lines: ["切除R80的圆", "多余部分"] },
  { x: 783, lines: ["画出两条需", "要求b长度的", "直线"] },
  { x: 898, lines: ["添加相等共", "线重合约束", "关系，确定", "两条直线的", "位置"] },
  { x: 1021, lines: ["画出3条要求", "a长度的直线"] },
  { x: 1144, lines: ["添加相等重", "合共线约束", "关系，确定3", "条直线位置"] },
  { x: 1242, left: true, lines: ["画起点端点", "半径圆弧，", "半径任意。", "然后添加相", "切重合约束", "关系。确定", "圆弧。"] },
  { x: 1372, left: true, lines: ["画相切相切", "半径圆"] },
  { x: 1477, left: true, lines: ["切除多余部", "分"] },
  { x: 1583, left: true, lines: ["删除求面积", "区域外其他", "线"] },
  { x: 1583, y: 498, left: true, lines: ["面域创建不", "成功。没求", "出面积。"] },
];
const specks = Array.from({ length: 56 }, (_, i) => {
  const turn = i * 2.4;
  const reach = i % 3 === 0 ? 0.5 : 0.86 + (i % 4) * 0.04;
  return {
    x: Math.round(40 + Math.cos(turn) * 29 * reach),
    y: Math.round(387 + Math.sin(turn) * 27 * reach),
    c: ["#fff", GREEN, "#bbb", "#ff3030", "#fff", "#16a085", "#888"][i % 7],
  };
});

const Drawing = () => (
  <svg width="100%" height="100%" role="img" aria-label="Drawing1">
    <g fill="none" stroke="#fff" shapeRendering="crispEdges">
      <path d="M6 22.500H193M1.500 0V18M1.500 27V214M1 18.500H6M1 26.500H6M5.500 19V26M1 22.500H4" />
      <rect x="24.500" y="781.500" width="17" height="17" />
      <path d="M33.500 781V649M42 789.500H173M28 666L33 649L39 666M157 783L173 789.500L157 795" />
    </g>
    <g fill="#fff" fontFamily="DejaVu Sans" fontWeight="200" fontSize="33">
      <text x="25" y="638">Y</text>
      <text x="185" y="802">X</text>
    </g>
    <rect x="3" y="358" width="85" height="60" fill="#fff" />
    <rect x="6" y="359" width="69" height="58" fill="#000" />
    <path d="M18 371C20 365 33 365 36 374C44 371 52 371 59 376C68 383 68 394 61 400C52 408 39 407 31 403C20 400 17 394 18 386C19 381 17 376 18 371Z" fill="#2468f0" />
    <path d="M29 399.500H51V390M39.500 388V399" stroke="#b8cdfa" strokeWidth="2" fill="none" />
    {specks.map((s, i) => <rect key={i} x={s.x} y={s.y} width={i % 3 ? 1 : 2} height="1" fill={s.c} />)}
    {steps.map((x, i) => <Step key={x} x={x - 80} n={i + 1} />)}
    <path d="M1504 381C1501 368 1504 361 1513 361C1522 361 1523 367 1526 371C1531 371 1532 368 1537 368.500H1546C1556 371 1559 382 1558 389C1557 398 1552 405 1544 405.500H1530C1521 404 1514 399 1508 394C1502 389 1503 386 1504 381Z" fill="none" stroke="#fff" shapeRendering="crispEdges" />
    <g fill="#fff" fontFamily="Noto Sans CJK SC, sans-serif" fontSize="9">
      {notes.map((n, i) => (
        <text key={i} textAnchor={n.left ? "start" : "middle"}>
          {n.lines.map((l, j) => <tspan key={j} x={n.x - 80} y={(n.y ?? 438) + Math.round(j * 11.4)}>{l}</tspan>)}
        </text>
      ))}
    </g>
  </svg>
);

/* ---------- command line and status ---------- */

const Command = styled.section`
  display: flex;
  height: 80px;
  padding-right: 8px;
  background: #fdfdfe;
  border-bottom: 1px solid #8c8c8c;
  box-shadow: inset -3px 0 #d3daee;
`;
const CommandSide = styled.div`
  width: 14px;
  display: flex;
  flex-direction: column;
  align-items: flex-end;
  gap: 4px;
  padding: 11px 1px 5px 0;
  background: #f2f2f2;
`;
const SideLines = styled.span`
  width: 7px;
  flex: 1;
  border: solid #9a9a9a;
  border-width: 0 1px;
`;
const CommandBody = styled.div`
  flex: 1;
  display: flex;
  flex-direction: column;
  margin-left: 4px;
  border-bottom: 1px solid #9a9a9a;
  font: 15px/21px ${mono};
`;
const LogRow = styled.div`
  display: flex;
  flex: 1;
  justify-content: space-between;
  padding-top: 4px;
  border-bottom: 1px solid #9a9a9a;
`;
const LogText = styled.pre`
  margin: 0;
  font: inherit;
`;
const PromptRow = styled.div`
  display: flex;
  height: 23px;
`;
const PromptLabel = styled.label`
  display: block;
`;
const PromptInput = styled.input`
  flex: 1;
  outline: 0;
`;
const VScroll = styled.div`
  display: flex;
  flex-direction: column;
`;
const ScrollButton = styled.button<{ $w: number; $h: number }>`
  display: flex;
  align-items: center;
  justify-content: center;
  width: ${(p) => p.$w}px;
  height: ${(p) => p.$h}px;
  border: 1px solid #8c8c8c;
  background: #fff;
`;
const HScroll = styled.div`
  display: flex;
  width: 81px;
  height: 21px;
  margin-right: 22px;
  background: #cdced0;
  justify-content: space-between;
`;
const ScrollPair = styled.div`
  display: flex;
`;
const StatusBar = styled.footer`
  position: relative;
  display: flex;
  align-items: flex-start;
  height: 21px;
  padding: 1px 6px 0 7px;
  background: #f0eeed;
  border-bottom: 2px solid #40566e;
  border-top: 1px solid #fff;
`;
const Coords = styled.output`
  width: 336px;
  padding-top: 2px;
  font: 13px/16px ${mono};
  white-space: pre;
`;
const StatusTools = styled.div`
  display: flex;
  gap: 4px;
  flex: 1;
  margin-left: -2px;
`;
const StatusButton = styled.button<{ $on?: boolean }>`
  display: flex;
  align-items: center;
  justify-content: center;
  width: 20px;
  height: 18px;
  border: 1px solid ${(p) => (p.$on ? "#9a9a9a" : "transparent")};
`;
const Watermark = styled.span`
  position: absolute;
  right: 19px;
  top: 0;
  color: #fff;
  font: 700 16px/16px "DejaVu Sans", "Noto Sans CJK SC", sans-serif;
  -webkit-text-stroke: 2px #ee2a30;
  paint-order: stroke fill;
  white-space: nowrap;
`;

const menus = ["文件(F)", "编辑(E)", "视图(V)", "插入(I)", "格式(O)", "工具(T)", "绘图(D)", "标注(N)", "修改(M)", "扩展工具(X)", "窗口(W)", "帮助(H)", "APP+", "机械(J)"];
const MenuLabel = ({ text }: { text: string }) => {
  const m = text.match(/^(.*)\((.)\)$/);
  return m ? <><Mixed text={m[1]} han={15} />(<u>{m[2]}</u>)</> : <>{text}</>;
};
const WinGlyphs = ({ color, gap, small }: { color: string; gap: number; small?: boolean }) => (
  <WindowButtons $gap={gap}>
    <BareButton aria-label="minimize"><svg width={small ? 8 : 12} height="12"><path d="M0 10H12" stroke={color} strokeWidth="2" /></svg></BareButton>
    <BareButton aria-label="restore"><svg width={small ? 10 : 12} height={small ? 10 : 12} viewBox="0 0 12 12"><path d="M1 4H9V11H1ZM3 1H11V9" fill="none" stroke={color} strokeWidth={small ? 1.3 : 2} /></svg></BareButton>
    <BareButton aria-label="close"><Cross size={small ? 8 : 11} color={color} w={1.5} /></BareButton>
  </WindowButtons>
);

export default function App() {
  return (
    <Screen>
      <Global />
      <TitleBar>
        <Icon name="logo" size={20} />
        <TitleText>
          <Mixed han={18} text={"中望CAD机械版2015试用版 (剩余 23 天) - 主图幅  标准:GB 图幅:-[ 绘图比例 1:1] - [C:\\Users\\Administrator\\Desktop\\Drawing1.dwg]"} />
        </TitleText>
        <WinGlyphs color="#cdd8e6" gap={13} />
      </TitleBar>
      <MenuBar>
        <DwgBadge $s={15}>DWG</DwgBadge>
        <MenuList>
          {menus.map((m) => <li key={m}><MenuButton><MenuLabel text={m} /></MenuButton></li>)}
        </MenuList>
        <WinGlyphs color="#8b8f96" gap={11} small />
      </MenuBar>

      <ToolRow>
        <ToolGroup>
          <Grip />
          <Tools list="new open save | print preview publish | cut copy paste brush | undo v redo w | pan zoomrt zoomwin zoomprev | sheetlist dcenter book | help" />
        </ToolGroup>
        <ToolGroup>
          <Grip />
          <Tools list="tstyle" /><Combo name="text style" value="Standard" w={100} />
          <Tools list="| dstyle" /><Combo name="dimension style" value="ISO-25" w={100} />
          <Tools list="| tbstyle" /><Combo name="table style" value="Standard" w={100} />
          <Tools list="| mlstyle" /><Combo name="leader style" value="Standard" w={100} />
        </ToolGroup>
        <ToolGroup>
          <Grip />
          <Tools list="bolt1 bearing gear1 wedge pulley spring pump seat nut spool | flange1 flange2 frame1 motor" />
        </ToolGroup>
        <ToolGroup $last>
          <Grip />
          <Tools list="balloon tabadd tabedit tabup | ballbrush tabpen numlist num123 | bulboff bulbon | num123b branchadd branchdel" />
        </ToolGroup>
      </ToolRow>

      <ToolRow $strong>
        <ToolGroup>
          <Grip />
          <Tools list="layers" />
          <Combo name="layer" value="0" w={300}>
            <LayerIcons>
              <Icon name="bulb" /><Icon name="sun" /><Icon name="freeze" /><Icon name="lock" />
            </LayerIcons>
            <Swatch />
          </Combo>
          <Tools list="layobj layprev laystate" />
        </ToolGroup>
        <ToolGroup>
          <Grip />
          <Combo name="color" value="ByLayer" w={150}><Swatch /></Combo>
          <Divider />
          <Combo name="linetype" value="ByLayer" w={160}><Stroke $w={60} /></Combo>
          <Divider />
          <Combo name="lineweight" value="ByLayer" w={125}><Stroke $w={35} /></Combo>
          <Divider />
          <Combo name="plot style" value="ByColor" w={120} off />
        </ToolGroup>
        <ToolGroup>
          <Grip />
          <Tools list="sheetgold sheetburst balloon | bolt | dimv rough ctrlbox weld text fillet chamfer hatchrot angle" />
        </ToolGroup>
        <ToolGroup $last>
          <Grip />
          <Tools list="sheetgold sheetburst sheetburst2 vp1 | vp1 vp2 vp3 vp4 vp5 vp6 vpadd | tbladd | stack pageedit" />
        </ToolGroup>
      </ToolRow>

      <WorkArea>
        <Column groups={["line xline pline polygon rect arc circle cloud spline ellipse earc insert block points hatch region table mtext"]} />
        <Column groups={["erase copyobj mirror offset array move rotate scale stretch trim extend breakpt breakat join chamf fil explode qselect", "rough ctrlbox datumc datuma bubble taper kb crossc zig vee weld gridsq"]} />
        <Column groups={["dimv dimbase dimnew dimlin dimver dimali dimord dimjog diadim raddim jogdim orddim arcdim contdim basedim angdim mleader center leada lead", "secta arrowa rota"]} />
        <DocArea>
          <DocTabs>
            <DocTab $w={214}><DwgBadge $s={19}>DWG</DwgBadge>C:\...\CGA_IR_V15A.dxf</DocTab>
            <DocTab $w={187} $on><DwgBadge $s={19}>DWG</DwgBadge>C:\...\Drawing1.dwg</DocTab>
            <TabArrows>
              <BareButton $w={5} aria-label="previous"><svg width="5" height="9"><path d="M4.500 .5V8.500L.5 4.500Z" fill="none" stroke="#777d86" /></svg></BareButton>
              <BareButton $w={5} aria-label="next"><svg width="5" height="9"><path d="M.5 .5V8.500L4.500 4.500Z" fill="none" stroke="#777d86" /></svg></BareButton>
              <BareButton $w={10} aria-label="list"><Triangle color="#fff" w={9} h={5} /></BareButton>
            </TabArrows>
          </DocTabs>
          <Canvas><Drawing /></Canvas>
          <LayoutTabs>
            <LayoutNav>
              {["M1 0V9M8 0V9L3 4.500Z", "M7 0V9L2 4.500Z", "M1 0V9L6 4.500Z", "M1 0V9L6 4.500ZM8 0V9"].map((d) => (
                <BareButton key={d} $w={9} aria-label="layout"><svg width="9" height="9"><path d={d} fill="#8c9198" stroke="#8c9198" strokeWidth="0.800" /></svg></BareButton>
              ))}
            </LayoutNav>
            <Slant fill />
            <LayoutTab $on>模型</LayoutTab>
            <Slant up fill />
            <LayoutTab>布局1</LayoutTab>
            <Slant />
            <LayoutTab>布局2</LayoutTab>
            <Slant up />
          </LayoutTabs>
        </DocArea>
        <Column groups={["rgold rballoon rplot rcross rdimv rrough rsecta rbolt rtext rfolder rshaft rbolt2 rcard rhelp", "ord1 ord2 ord3 ord4"]} />
        <Panel>
          <PanelHead>
            <PanelGrip />
            <PanelClose aria-label="close panel"><Cross color="#000" /></PanelClose>
          </PanelHead>
          <PanelPick>
            <PickSelect $w={150}>
              <ComboSelect aria-label="selection" defaultValue="无选择"><option>无选择</option></ComboSelect>
              <ComboArrow><Triangle /></ComboArrow>
            </PickSelect>
            <PickButtons>
              <PickButton aria-label="pick"><Icon name="pick" /></PickButton>
              <PickButton aria-label="select objects"><Icon name="selobj" /></PickButton>
              <PickButton aria-label="quick select"><Icon name="quick" /></PickButton>
            </PickButtons>
          </PanelPick>
          <Sections>
            {sections.map((s) => (
              <section key={s.title}>
                <SectionHead>
                  {s.title}
                  <svg width="9" height="10" aria-hidden="true"><path d="M.5 4.500L4.500 1L8.500 4.500M.5 9L4.500 5.500L8.500 9" fill="none" stroke="#fff" strokeWidth="1.300" /></svg>
                </SectionHead>
                <Grid>
                  <tbody>
                    {s.rows.map(([label, value, mark], i) => (
                      <tr key={label}>
                        <th scope="row"><CellFlow $raised><span><Mixed text={label} han={15} /></span></CellFlow></th>
                        <Value $edit={s.edit(i)}>
                          <CellFlow>
                            {mark === "swatch" && <Swatch />}
                            {mark === "line" && <Stroke $w={48} />}
                            <span><Mixed text={value} han={15} /></span>
                          </CellFlow>
                        </Value>
                      </tr>
                    ))}
                  </tbody>
                </Grid>
              </section>
            ))}
          </Sections>
          <DetailBox />
        </Panel>
      </WorkArea>

      <Command>
        <CommandSide>
          <BareButton $w={8} aria-label="close command line"><Cross size={7} color="#000" /></BareButton>
          <SideLines />
        </CommandSide>
        <CommandBody>
          <LogRow>
            <LogText><Mixed han={18} text={"命令: 取消!\n命令: '_.zoom _e"} /></LogText>
            <VScroll>
              <ScrollButton $w={17} $h={12} aria-label="up"><svg width="8" height="4"><path d="M0 4H8L4 0Z" /></svg></ScrollButton>
              <ScrollButton $w={17} $h={16} aria-label="thumb" />
              <ScrollButton $w={17} $h={17} aria-label="down"><Triangle /></ScrollButton>
            </VScroll>
          </LogRow>
          <PromptRow>
            <PromptLabel htmlFor="prompt"><Mixed han={18} text="命令:" /></PromptLabel>
            <PromptInput id="prompt" />
            <HScroll>
              <ScrollPair>
                <ScrollButton $w={17} $h={21} aria-label="left"><svg width="4" height="8"><path d="M4 0V8L0 4Z" /></svg></ScrollButton>
                <ScrollButton $w={16} $h={21} aria-label="thumb" />
              </ScrollPair>
              <ScrollButton $w={17} $h={21} aria-label="right"><svg width="4" height="8"><path d="M0 0V8L4 4Z" /></svg></ScrollButton>
            </HScroll>
          </PromptRow>
        </CommandBody>
      </Command>
      <StatusBar>
        <Coords>214.5750,  752.3555, 0.0000</Coords>
        <StatusTools>
          {["snap", "grid", "ortho", "polar", "osnap", "otrack", "dyn", "lwt", "ducs", "annot"].map((n, i) => (
            <StatusButton key={n} aria-label={n} $on={i > 2 && i !== 7}><Icon name={n} /></StatusButton>
          ))}
        </StatusTools>
        <WindowButtons $gap={6}>
          <StatusButton aria-label="workspace"><Icon name="logo" /></StatusButton>
          <StatusButton aria-label="settings"><Icon name="gearst" /></StatusButton>
          <StatusButton $on aria-label="clean" />
          <StatusButton aria-label="full screen"><Icon name="full" /></StatusButton>
        </WindowButtons>
        <Watermark>三维网www.3dportal.cn</Watermark>
      </StatusBar>
    </Screen>
  );
}
